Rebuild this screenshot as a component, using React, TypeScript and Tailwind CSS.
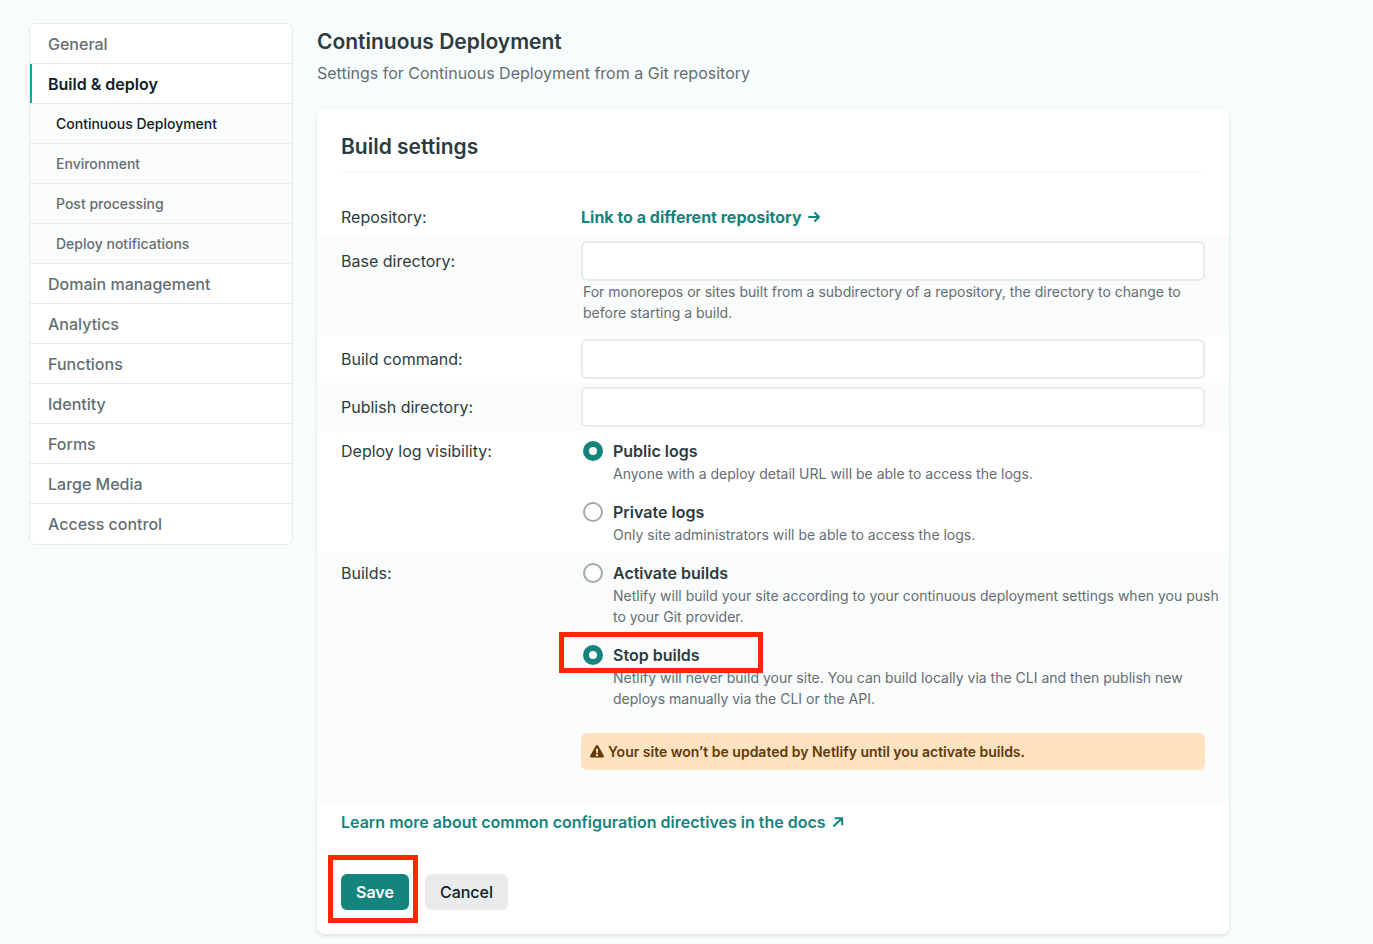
import { useState } from "react";
import type { ReactNode } from "react";

type NavItem = { label: string; level?: "sub"; state?: "section" | "page" };

const navItems: NavItem[] = [
  { label: "General" },
  { label: "Build & deploy", state: "section" },
  { label: "Continuous Deployment", level: "sub", state: "page" },
  { label: "Environment", level: "sub" },
  { label: "Post processing", level: "sub" },
  { label: "Deploy notifications", level: "sub" },
  { label: "Domain management" },
  { label: "Analytics" },
  { label: "Functions" },
  { label: "Identity" },
  { label: "Forms" },
  { label: "Large Media" },
  { label: "Access control" },
];

function navClass(item: NavItem) {
  if (item.state === "section")
    return "border-l-2 border-l-[#00ad9f] bg-white pl-4 text-base font-semibold text-[#0e1e25]";
  if (item.level === "sub")
    return item.state === "page"
      ? "bg-[#fafbfb] pl-[26px] text-sm font-medium text-[#0e1e25]"
      : "bg-[#fafbfb] pl-[26px] text-sm font-medium text-[#646e73]";
  return "bg-white pl-[18px] text-base font-medium text-[#646e73]";
}

function Sidebar() {
  return (
    <nav aria-label="Site settings" className="w-[264px] shrink-0">
      <ul className="overflow-hidden rounded-md border border-[#e9ebeb] bg-white">
        {navItems.map((item) => (
          <li key={item.label} className="flex h-10 border-b border-[#e9ebeb] last:border-b-0">
            <a href="#" className={`flex flex-1 items-center ${navClass(item)}`}>
              {item.label}
            </a>
          </li>
        ))}
      </ul>
    </nav>
  );
}

function Highlight({ className }: { className: string }) {
  return (
    <span
      aria-hidden="true"
      className={`pointer-events-none absolute z-10 border-[5px] border-[#ff2600] ${className}`}
    />
  );
}

function TextRow(props: { id: string; label: string; shaded?: boolean; help?: string }) {
  return (
    <div className={`flex px-6 pt-1 ${props.help ? "pb-3" : "pb-1"} ${props.shaded ? "bg-[#fafbfb]" : ""}`}>
      <label htmlFor={props.id} className="w-60 shrink-0 pt-2">
        {props.label}
      </label>
      <div className="min-w-0 flex-1">
        <input
          id={props.id}
          type="text"
          className="block h-10 w-full rounded-md border-2 border-[#e9ebeb] bg-white px-2 outline-none focus:border-[#15847d]"
        />
        {props.help && <p className="pl-0.5 text-sm leading-[21px] text-[#646e73]">{props.help}</p>}
      </div>
    </div>
  );
}

function Option(props: {
  name: string;
  title: string;
  help: string;
  checked: boolean;
  onSelect: () => void;
  children?: ReactNode;
}) {
  return (
    <label className="relative -mr-5 flex gap-2.5 pl-0.5">
      <input
        type="radio"
        name={props.name}
        checked={props.checked}
        onChange={props.onSelect}
        className="mt-0.5 size-5 shrink-0 appearance-none rounded-full border-2 border-[#a3a9ac] bg-white checked:border-[6px] checked:border-[#15847d]"
      />
      <span className="block min-w-0">
        <span className="block font-semibold">{props.title}</span>
        <span className="block text-sm leading-[21px] text-[#646e73]">{props.help}</span>
      </span>
      {props.children}
    </label>
  );
}

function ArrowRight() {
  return (
    <svg
      viewBox="0 0 12 12"
      className="size-3"
      fill="none"
      stroke="currentColor"
      strokeWidth="2"
      strokeLinecap="round"
      strokeLinejoin="round"
      aria-hidden="true"
    >
      <path d="M1 6h10M7 2l4 4-4 4" />
    </svg>
  );
}

function ArrowUpRight() {
  return (
    <svg viewBox="0 0 12 12" className="size-3" fill="none" stroke="currentColor" strokeWidth="2" aria-hidden="true">
      <path d="M1.2 10.6 9.4 3M2.6 2.2h7.6v7" />
    </svg>
  );
}

function WarningIcon() {
  return (
    <svg viewBox="0 0 14 13" className="h-[13px] w-[14px] shrink-0" aria-hidden="true">
      <path
        fill="currentColor"
        fillRule="evenodd"
        d="M5.8.7a1.4 1.4 0 0 1 2.4 0l5.6 10A1.4 1.4 0 0 1 12.6 12.6H1.4A1.4 1.4 0 0 1 .2 10.700zM5.900 3.800l.3 4.200h1.600l.3-4.200zM7 8.800a1.200 1.200 0 1 0 0 2.400 1.200 1.200 0 0 0 0-2.400z"
      />
    </svg>
  );
}

export default function App() {
  const [logs, setLogs] = useState("public");
  const [builds, setBuilds] = useState("stop");

  return (
    <div className="min-h-screen bg-[#f7fdfd] pt-[23px] pb-[10px] pl-[29px] font-['Inter','Liberation_Sans',sans-serif] text-base text-[#2d3b41]">
      <div className="flex max-w-[1200px] items-start gap-6">
        <Sidebar />
        <main className="min-w-0 flex-1">
          <h1 className="text-[21px] leading-[38px] font-semibold">Continuous Deployment</h1>
          <p className="text-[#646e73]">Settings for Continuous Deployment from a Git repository</p>

          <section className="mt-6 rounded-lg bg-white pt-6 pb-6 shadow-[0_2px_4px_rgba(14,30,37,0.12)]">
            <h2 className="mx-6 border-b-2 border-[#fafbfb] pb-2.5 text-[21px] leading-7 font-semibold">
              Build settings
            </h2>
            <form className="mt-6" onSubmit={(e) => e.preventDefault()}>
              <div className="flex px-6 py-2">
                <span className="w-60 shrink-0">Repository:</span>
                <a href="#" className="flex items-center gap-1.5 font-bold text-[#15847d]">
                  Link to a different repository
                  <ArrowRight />
                </a>
              </div>
              <TextRow
                id="base"
                label="Base directory:"
                shaded
                help="For monorepos or sites built from a subdirectory of a repository, the directory to change to before starting a build."
              />
              <TextRow id="command" label="Build command:" />
              <TextRow id="publish" label="Publish directory:" shaded />

              <div role="radiogroup" aria-labelledby="logs-label" className="flex px-6 py-2">
                <span id="logs-label" className="w-60 shrink-0">Deploy log visibility:</span>
                <div className="flex min-w-0 flex-1 flex-col gap-4">
                  <Option
                    name="logs"
                    title="Public logs"
                    help="Anyone with a deploy detail URL will be able to access the logs."
                    checked={logs === "public"}
                    onSelect={() => setLogs("public")}
                  />
                  <Option
                    name="logs"
                    title="Private logs"
                    help="Only site administrators will be able to access the logs."
                    checked={logs === "private"}
                    onSelect={() => setLogs("private")}
                  />
                </div>
              </div>

              <div role="radiogroup" aria-labelledby="builds-label" className="flex bg-[#fafbfb] px-6 pt-2 pb-8">
                <span id="builds-label" className="w-60 shrink-0">Builds:</span>
                <div className="flex min-w-0 flex-1 flex-col gap-4">
                  <Option
                    name="builds"
                    title="Activate builds"
                    help="Netlify will build your site according to your continuous deployment settings when you push to your Git provider."
                    checked={builds === "activate"}
                    onSelect={() => setBuilds("activate")}
                  />
                  <Option
                    name="builds"
                    title="Stop builds"
                    help="Netlify will never build your site. You can build locally via the CLI and then publish new deploys manually via the CLI or the API."
                    checked={builds === "stop"}
                    onSelect={() => setBuilds("stop")}
                  >
                    <Highlight className="-top-[11px] -left-[22px] h-[41px] w-[204px]" />
                  </Option>
                  <p className="mt-2 flex items-center gap-1 rounded-md bg-[#ffe2bf] px-[9px] py-2 text-sm leading-[21px] font-semibold text-[#603a0c]">
                    <WarningIcon />
                    Your site won’t be updated by Netlify until you activate builds.
                  </p>
                </div>
              </div>

              <div className="flex px-6 pt-2">
                <a href="#" className="flex items-center gap-1.5 font-semibold text-[#15847d]">
                  Learn more about common configuration directives in the docs
                  <ArrowUpRight />
                </a>
              </div>
              <div className="mt-10 flex gap-4 px-6">
                <div className="relative">
                  <button type="submit" className="h-9 rounded-md bg-[#15847d] px-[15px] font-semibold text-white">
                    Save
                  </button>
                  <Highlight className="-top-[19px] -left-[13px] h-[68px] w-[90px]" />
                </div>
                <button type="button" className="h-9 rounded-md bg-[#e9ebed] px-[15px] font-medium text-[#0e1e25]">
                  Cancel
                </button>
              </div>
            </form>
          </section>
        </main>
      </div>
    </div>
  );
}
